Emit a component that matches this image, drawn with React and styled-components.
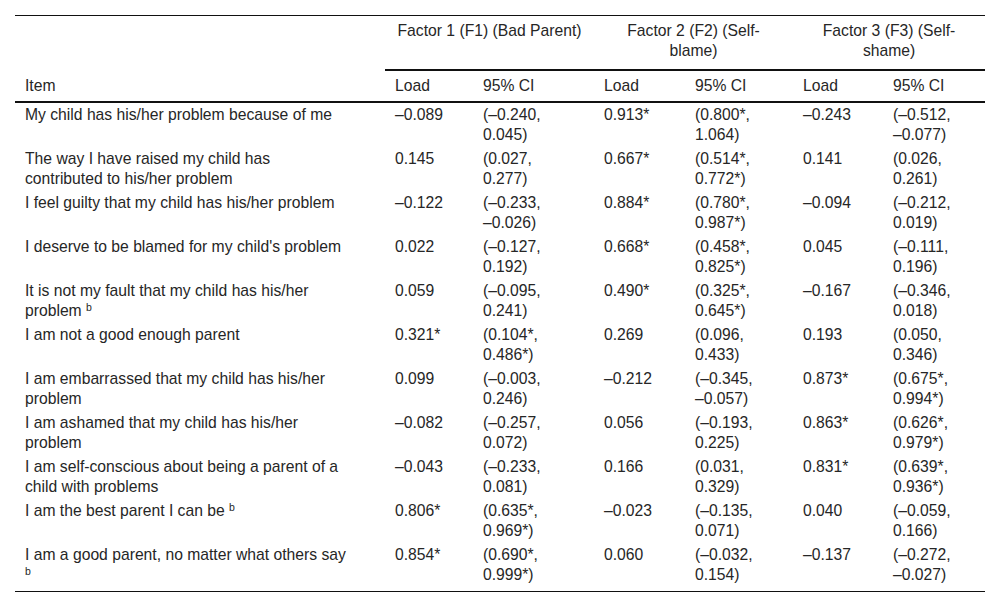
import React from "react";
import styled, { createGlobalStyle } from "styled-components";

const GlobalStyle = createGlobalStyle`
  html, body {
    margin: 0;
    padding: 0;
    background: #fff;
  }
  body {
    font-family: "Liberation Sans", Arial, sans-serif;
    color: #262626;
  }
`;

const Wrapper = styled.div`
  padding: 15px;
`;

const Table = styled.table`
  width: 970px;
  table-layout: fixed;
  border-collapse: collapse;
  border-top: 1px solid #111;
  border-bottom: 1px solid #111;
  font-size: 15.7px;
  line-height: 20px;

  tbody tr:last-child td {
    padding-bottom: 6px;
  }
`;

const FactorCell = styled.th`
  font-weight: normal;
  text-align: center;
  vertical-align: top;
  padding: 5px 10px 8px;
  border-bottom: ${(p) => (p.$line ? "2px solid #111" : "none")};
`;

const LabelCell = styled.th`
  font-weight: normal;
  text-align: left;
  vertical-align: bottom;
  padding: 5px ${(p) => (p.$item ? "36px" : "10px")} 5px 10px;
  border-bottom: 2px solid #111;
`;

const Cell = styled.td`
  vertical-align: top;
  text-align: left;
  padding: 2px ${(p) => (p.$item ? "36px" : "10px")} 2px 10px;
`;

const Bound = styled.span`
  display: block;
  white-space: nowrap;
`;

const Sup = styled.sup`
  font-size: 10.5px;
  line-height: 0;
  vertical-align: 5px;
`;

const widths = [370, 88, 121, 91, 108, 90, 102];

const rows = [
  { item: "My child has his/her problem because of me", v: ["–0.089", "(–0.240, 0.045)", "0.913*", "(0.800*, 1.064)", "–0.243", "(–0.512, –0.077)"] },
  { item: "The way I have raised my child has contributed to his/her problem", v: ["0.145", "(0.027, 0.277)", "0.667*", "(0.514*, 0.772*)", "0.141", "(0.026, 0.261)"] },
  { item: "I feel guilty that my child has his/her problem", v: ["–0.122", "(–0.233, –0.026)", "0.884*", "(0.780*, 0.987*)", "–0.094", "(–0.212, 0.019)"] },
  { item: "I deserve to be blamed for my child's problem", v: ["0.022", "(–0.127, 0.192)", "0.668*", "(0.458*, 0.825*)", "0.045", "(–0.111, 0.196)"] },
  { item: "It is not my fault that my child has his/her problem", sup: true, v: ["0.059", "(–0.095, 0.241)", "0.490*", "(0.325*, 0.645*)", "–0.167", "(–0.346, 0.018)"] },
  { item: "I am not a good enough parent", v: ["0.321*", "(0.104*, 0.486*)", "0.269", "(0.096, 0.433)", "0.193", "(0.050, 0.346)"] },
  { item: "I am embarrassed that my child has his/her problem", v: ["0.099", "(–0.003, 0.246)", "–0.212", "(–0.345, –0.057)", "0.873*", "(0.675*, 0.994*)"] },
  { item: "I am ashamed that my child has his/her problem", v: ["–0.082", "(–0.257, 0.072)", "0.056", "(–0.193, 0.225)", "0.863*", "(0.626*, 0.979*)"] },
  { item: "I am self-conscious about being a parent of a child with problems", v: ["–0.043", "(–0.233, 0.081)", "0.166", "(0.031, 0.329)", "0.831*", "(0.639*, 0.936*)"] },
  { item: "I am the best parent I can be", sup: true, v: ["0.806*", "(0.635*, 0.969*)", "–0.023", "(–0.135, 0.071)", "0.040", "(–0.059, 0.166)"] },
  { item: "I am a good parent, no matter what others say", sup: true, v: ["0.854*", "(0.690*, 0.999*)", "0.060", "(–0.032, 0.154)", "–0.137", "(–0.272, –0.027)"] },
];

// CI values are split at the comma: lower bound on one line, upper on the next
const renderValue = (t) => {
  if (!t.startsWith("(")) return t;
  const [lo, hi] = t.split(", ");
  return (
    <>
      <Bound>{lo},</Bound>
      <Bound>{hi}</Bound>
    </>
  );
};

export default function App() {
  return (
    <Wrapper>
      <GlobalStyle />
      <Table>
        <colgroup>
          {widths.map((w, i) => (
            <col key={i} style={{ width: w }} />
          ))}
        </colgroup>
        <thead>
          <tr>
            <FactorCell />
            <FactorCell colSpan={2} $line>Factor 1 (F1) (Bad Parent)</FactorCell>
            <FactorCell colSpan={2} $line>Factor 2 (F2) (Self-blame)</FactorCell>
            <FactorCell colSpan={2} $line>Factor 3 (F3) (Self-shame)</FactorCell>
          </tr>
          <tr>
            <LabelCell $item>Item</LabelCell>
            <LabelCell>Load</LabelCell>
            <LabelCell>95% CI</LabelCell>
            <LabelCell>Load</LabelCell>
            <LabelCell>95% CI</LabelCell>
            <LabelCell>Load</LabelCell>
            <LabelCell>95% CI</LabelCell>
          </tr>
        </thead>
        <tbody>
          {rows.map((r, i) => (
            <tr key={i}>
              <Cell $item>
                {r.item}
                {r.sup && (
                  <>
                    {" "}
                    <Sup>b</Sup>
                  </>
                )}
              </Cell>
              {r.v.map((t, j) => (
                <Cell key={j}>{renderValue(t)}</Cell>
              ))}
            </tr>
          ))}
        </tbody>
      </Table>
    </Wrapper>
  );
}
